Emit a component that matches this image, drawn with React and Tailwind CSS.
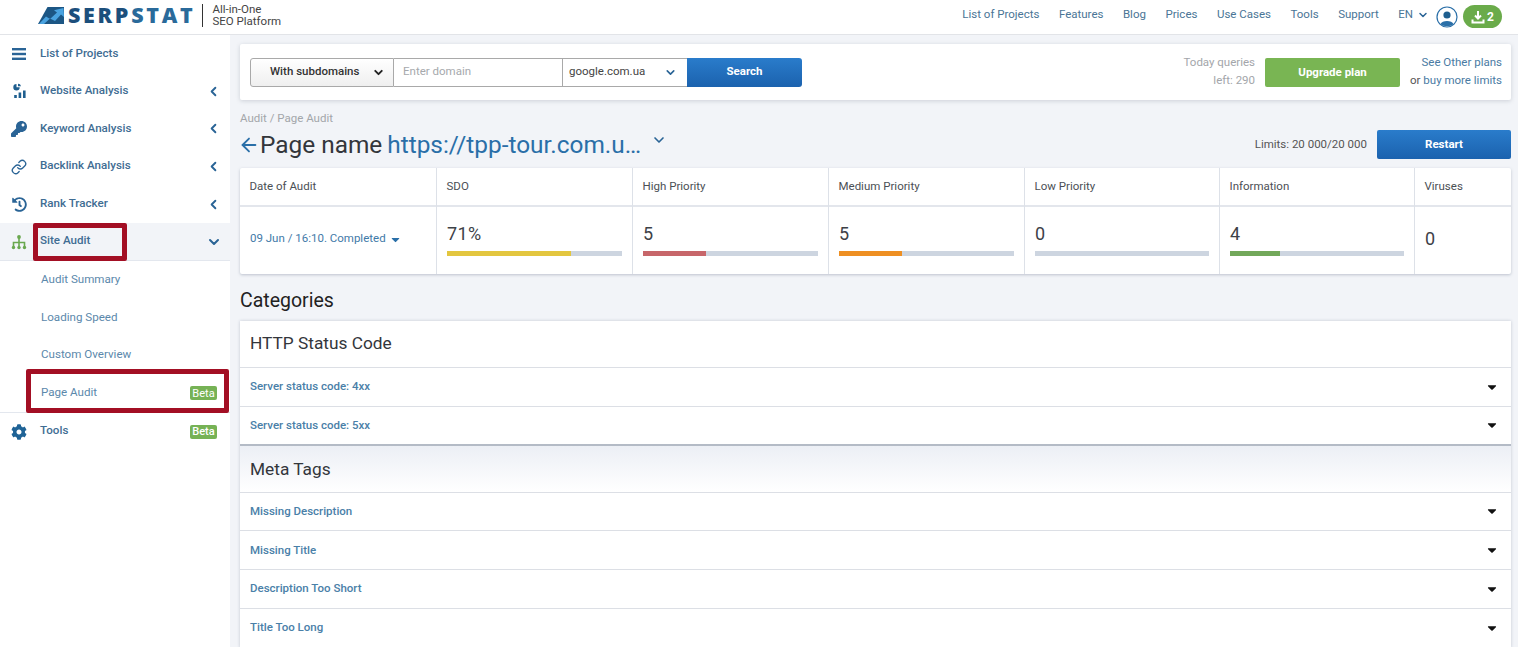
import React from "react";
import { FaKey, FaHistory, FaCog, FaCaretDown } from "react-icons/fa";
import { Link as LinkIcon, ChevronLeft, ChevronDown, ArrowLeft } from "lucide-react";

const navTop = [
  ["List of Projects", "menu", false],
  ["Website Analysis", "stats", true],
  ["Keyword Analysis", "key", true],
  ["Backlink Analysis", "link", true],
  ["Rank Tracker", "history", true],
];

function NavIcon({ name }) {
  if (name === "menu")
    return (
      <svg width="16" height="14" viewBox="0 0 16 14" fill="#2a6496">
        <rect x="1" y="1" width="14" height="2.4" />
        <rect x="1" y="5.8" width="14" height="2.4" />
        <rect x="1" y="10.6" width="14" height="2.4" />
      </svg>
    );
  if (name === "stats")
    return (
      <svg width="16" height="16" viewBox="0 0 16 16" fill="#1f5f8f">
        <path d="M5.5 1a3.2 3.2 0 1 0 3.2 3.2H5.5Z" />
        <path d="M7 .8a3 3 0 0 1 3 2.4H7Z" />
        <rect x="3.2" y="12" width="2.6" height="3" />
        <rect x="7.6" y="9.5" width="2.6" height="5.5" />
        <rect x="12" y="7.5" width="2.6" height="7.5" />
      </svg>
    );
  if (name === "key") return <FaKey size={16} color="#2a6496" />;
  if (name === "link") return <LinkIcon size={16} color="#2a6496" strokeWidth={2} />;
  if (name === "history") return <FaHistory size={15} color="#2a6496" />;
  return null;
}

const Sitemap = () => (
  <svg width="16" height="16" viewBox="0 0 16 16" fill="none" stroke="#6aa84f" strokeWidth="1.6">
    <circle cx="8" cy="3" r="1.9" fill="#6aa84f" stroke="none" />
    <path d="M8 3v9M2.5 13V8.5h11V13" />
    <circle cx="2.5" cy="13.5" r="1.7" fill="#6aa84f" stroke="none" />
    <circle cx="8" cy="13.5" r="1.7" fill="#6aa84f" stroke="none" />
    <circle cx="13.5" cy="13.5" r="1.7" fill="#6aa84f" stroke="none" />
  </svg>
);

const Beta = () => (
  <span className="flex h-[14px] w-[27px] items-center justify-center rounded-[2px] bg-[#76b255] text-[11px] leading-none text-white">
    Beta
  </span>
);

function Sidebar() {
  return (
    <aside className="w-[230px] shrink-0 bg-white text-[11.6px] font-medium text-[#3f6d93]">
      {navTop.map(([label, icon, chevron]) => (
        <div key={label} className="flex h-[37.6px] items-center">
          <span className="flex w-[40px] shrink-0 justify-center pr-[2px]">
            <NavIcon name={icon} />
          </span>
          <span className="flex-1 pb-[1px]">{label}</span>
          {chevron && <ChevronLeft size={15} strokeWidth={3} color="#2a6496" className="mr-[9px]" />}
        </div>
      ))}
      <div className="relative flex h-[38.4px] items-center border-b border-[#e3e7ee] bg-[#f2f4f8]">
        <span className="flex w-[40px] shrink-0 justify-center pr-[2px]">
          <Sitemap />
        </span>
        <span className="flex-1 pb-[1px]">Site Audit</span>
        <ChevronDown size={16} strokeWidth={3} color="#2a6496" className="mr-[8px]" />
        <div className="absolute left-[33px] top-[0px] h-[38px] w-[94px] rounded-[2px] border-[5px] border-[#a30f24]" />
      </div>
      <div className="font-normal text-[#5b88ab]">
        {["Audit Summary", "Loading Speed", "Custom Overview"].map((t) => (
          <div key={t} className="flex h-[37.6px] items-center pb-[1px] pl-[41px]">
            {t}
          </div>
        ))}
        <div className="relative flex h-[38px] items-center pl-[41px] pr-[13px]">
          <span className="flex-1 pb-[1px]">Page Audit</span>
          <Beta />
          <div className="absolute left-[26px] top-[-5px] h-[44px] w-[203px] rounded-[2px] border-[5px] border-[#a30f24]" />
        </div>
      </div>
      <div className="flex h-[38px] items-center border-t border-[#e3e7ee] pr-[13px]">
        <span className="flex w-[40px] shrink-0 justify-center pr-[2px]">
          <FaCog size={16} color="#1f6396" />
        </span>
        <span className="flex-1 pb-[1px]">Tools</span>
        <Beta />
      </div>
    </aside>
  );
}

function Header() {
  return (
    <header className="flex h-[35px] shrink-0 items-center justify-between border-b border-[#e2e4e8] bg-white pb-[4px] pr-[16px]">
      <div className="flex items-center pl-[38px]">
        <svg width="27" height="17" viewBox="0 0 27 17">
          <path d="M9.5 0H26V17H0Z" fill="#1c5684" />
          <path d="M1 17 8 9.5l4 2.5 7-6.5-3-2.2L25.5 1l.5 9-3-2.5-6 6.5-5-2.6L6 17Z" fill="#4aa3e0" />
        </svg>
        <span className="ml-[3px] font-['Open_Sans',sans-serif] text-[21.5px] font-extrabold leading-none tracking-[2.7px] text-[#1c4f7c]">
          SERP<span className="text-[#2a6a9a]">STAT</span>
        </span>
        <span className="ml-[7px] h-[23px] w-px bg-[#333]" />
        <span className="ml-[9px] pt-[1px] text-[11.5px] leading-[11.5px] text-[#444]">
          All-in-One
          <br />
          SEO Platform
        </span>
      </div>
      <nav className="flex items-center text-[11.5px] text-[#4a7596]">
        {["List of Projects", "Features", "Blog", "Prices", "Use Cases", "Tools", "Support"].map((t) => (
          <span key={t} className="mr-[19.5px]">
            {t}
          </span>
        ))}
        <span>EN</span>
        <ChevronDown size={12} strokeWidth={3} className="ml-[4px]" color="#2a6496" />
        <svg width="22" height="22" viewBox="0 0 22 22" className="ml-[7px] mt-[3px]">
          <circle cx="11" cy="11" r="10" fill="#fff" stroke="#2a6fa8" strokeWidth="1.2" />
          <circle cx="11" cy="9" r="3.6" fill="#1f5f8f" />
          <path d="M4.5 18 C6 14 16 14 17.5 18 C15 21 7 21 4.5 18Z" fill="#2a6fa8" />
        </svg>
        <span className="ml-[5px] mt-[3px] flex h-[23px] w-[39px] items-center justify-center gap-[2px] rounded-full bg-[#6aab4a] text-[12px] font-bold text-white">
          <svg width="14" height="14" viewBox="0 0 14 14" fill="none" stroke="#fff" strokeWidth="2">
            <path d="M7 1v7M4 5.5 7 8.5l3-3" />
            <path d="M1.5 9.5v3h11v-3" />
          </svg>
          2
        </span>
      </nav>
    </header>
  );
}

function SearchCard() {
  return (
    <div className="flex h-[56px] items-center justify-between rounded-[2px] bg-white pl-[10px] pr-[9px] shadow-[0_1px_4px_rgba(90,100,120,0.25)]">
      <div className="flex h-[29px] text-[11.5px]">
        <div className="flex w-[144px] items-center rounded-l-[3px] border border-[#a9a9a9] bg-gradient-to-b from-white to-[#efefef] pl-[19px] font-medium text-[#333]">
          With subdomains
          <ChevronDown size={13} strokeWidth={3.5} color="#222" className="ml-[13px]" />
        </div>
        <div className="flex w-[168px] items-center border-y border-[#a9a9a9] pl-[9px] text-[#a6a9ad]">Enter domain</div>
        <div className="flex w-[125px] items-center border border-r-0 border-[#a9a9a9] pl-[6px] text-[#444]">
          google.com.ua
          <ChevronDown size={13} strokeWidth={3} color="#2a6496" className="ml-[19px]" />
        </div>
        <div className="flex w-[115px] items-center justify-center rounded-r-[3px] bg-gradient-to-b from-[#2a7ccb] to-[#1b62ae] font-bold text-white">
          Search
        </div>
      </div>
      <div className="flex items-center text-[11.5px] leading-[18px]">
        <div className="pb-[2px] text-right text-[#a3a6aa]">
          Today queries
          <br />
          left: 290
        </div>
        <div className="ml-[10px] flex h-[29px] w-[135px] items-center justify-center rounded-[2px] bg-[#79b553] pb-[1px] font-bold text-white">
          Upgrade plan
        </div>
        <div className="ml-[10px] pb-[2px] text-right text-[#4a7ba3]">
          See Other plans
          <br />
          <span className="text-[#555]">or </span>buy more limits
        </div>
      </div>
    </div>
  );
}

const cols = [
  { title: "Date of Audit", w: "w-[197px]" },
  { title: "SDO", w: "w-[196px]", value: "71%", pct: 71, color: "bg-[#e3c63f]" },
  { title: "High Priority", w: "w-[196px]", value: "5", pct: 36, color: "bg-[#c7666a]" },
  { title: "Medium Priority", w: "w-[196px]", value: "5", pct: 36, color: "bg-[#ee8f22]" },
  { title: "Low Priority", w: "w-[195px]", value: "0", pct: 0, color: "bg-[#cdd5e0]" },
  { title: "Information", w: "w-[195px]", value: "4", pct: 29, color: "bg-[#72a85a]" },
  { title: "Viruses", w: "flex-1" },
];

function StatsTable() {
  return (
    <div className="mt-[9px] flex h-[106px] rounded-[2px] bg-white shadow-[0_1px_3px_rgba(90,100,130,0.35)]">
      {cols.map((c, i) => (
        <div key={c.title} className={`${c.w} flex flex-col ${i < 6 ? "border-r border-[#dde1e8]" : ""}`}>
          <div className="flex h-[39px] shrink-0 items-center border-b-2 border-[#e3e6ec] pl-[9.5px] text-[11.5px] text-[#4b4f55]">
            {c.title}
          </div>
          <div className="flex flex-1 flex-col justify-center px-[10px]">
            {i === 0 && (
              <div className="flex items-center pb-[3px] text-[11.5px] text-[#3f7aa8]">
                09 Jun / 16:10. Completed
                <FaCaretDown size={13} className="ml-[3px]" color="#2a6fa8" />
              </div>
            )}
            {c.value && c.pct !== undefined && (
              <div className="pb-[3px]">
                <div className="text-[18px] leading-[24px] tracking-[0.4px] text-[#3d4147]">{c.value}</div>
                <div className="mt-[5px] h-[5px] w-full bg-[#cdd5e0]">
                  <div className={`h-full ${c.color}`} style={{ width: `${c.pct}%` }} />
                </div>
              </div>
            )}
            {i === 6 && <div className="pb-[4px] text-[18px] leading-[24px] text-[#3d4147]">0</div>}
          </div>
        </div>
      ))}
    </div>
  );
}

function Row({ children, last }) {
  return (
    <div
      className={`flex h-[38.8px] shrink-0 items-center justify-between bg-white pl-[10px] pr-[12px] text-[11.5px] font-medium text-[#4a80a8] ${
        last ? "border-b-2 border-[#b4bbc6]" : "border-b border-[#dcdfe5]"
      }`}
    >
      <span>{children}</span>
      <FaCaretDown size={14} color="#111" />
    </div>
  );
}

export default function App() {
  return (
    <div className="flex h-[647px] w-[1518px] flex-col overflow-hidden bg-[#f2f4f8] font-['Roboto',sans-serif]">
      <Header />
      <div className="flex min-h-0 flex-1">
        <Sidebar />
        <main className="min-w-0 flex-1 pl-[10px] pr-[7px] pt-[9px]">
          <SearchCard />
          <div className="mt-[12px] text-[11.5px] leading-[13px] text-[#a3a6aa]">Audit / Page Audit</div>
          <div className="mt-[5px] flex h-[29px] items-center justify-between">
            <div className="flex items-center text-[24.4px] font-normal leading-[29px]">
              <ArrowLeft size={22} strokeWidth={2} color="#2a6fa8" className="ml-[-2px] mr-[0px]" />
              <span className="text-[#33363b]">Page name</span>
              <span className="ml-[5px] text-[#2a6fa8]">https://tpp-tour.com.u…</span>
              <ChevronDown size={16} strokeWidth={2.5} color="#2a6496" className="ml-[10px] mt-[-9px]" />
            </div>
            <div className="flex items-center text-[11.5px] text-[#555]">
              Limits: 20 000/20 000
              <div className="ml-[10px] flex h-[29px] w-[134px] items-center justify-center rounded-[2px] bg-gradient-to-b from-[#2a7ccb] to-[#1b62ae] font-bold text-white">
                Restart
              </div>
            </div>
          </div>
          <StatsTable />
          <div className="mt-[15px] text-[19.5px] leading-[24px] text-[#222]">Categories</div>
          <div className="mt-[8px] flex flex-col shadow-[0_0_3px_rgba(90,100,130,0.3)]">
            <div className="flex h-[47px] shrink-0 items-center border-b border-[#dcdfe5] bg-white pl-[10px] text-[17.3px] text-[#33363b]">
              HTTP Status Code
            </div>
            <Row>Server status code: 4xx</Row>
            <Row last>Server status code: 5xx</Row>
            <div className="flex h-[47px] shrink-0 items-center border-b border-[#dcdfe5] bg-gradient-to-b from-[#eceff5] to-white pt-[2px] pl-[10px] text-[17.3px] text-[#33363b]">
              Meta Tags
            </div>
            <Row>Missing Description</Row>
            <Row>Missing Title</Row>
            <Row>Description Too Short</Row>
            <Row>Title Too Long</Row>
          </div>
        </main>
      </div>
    </div>
  );
}
